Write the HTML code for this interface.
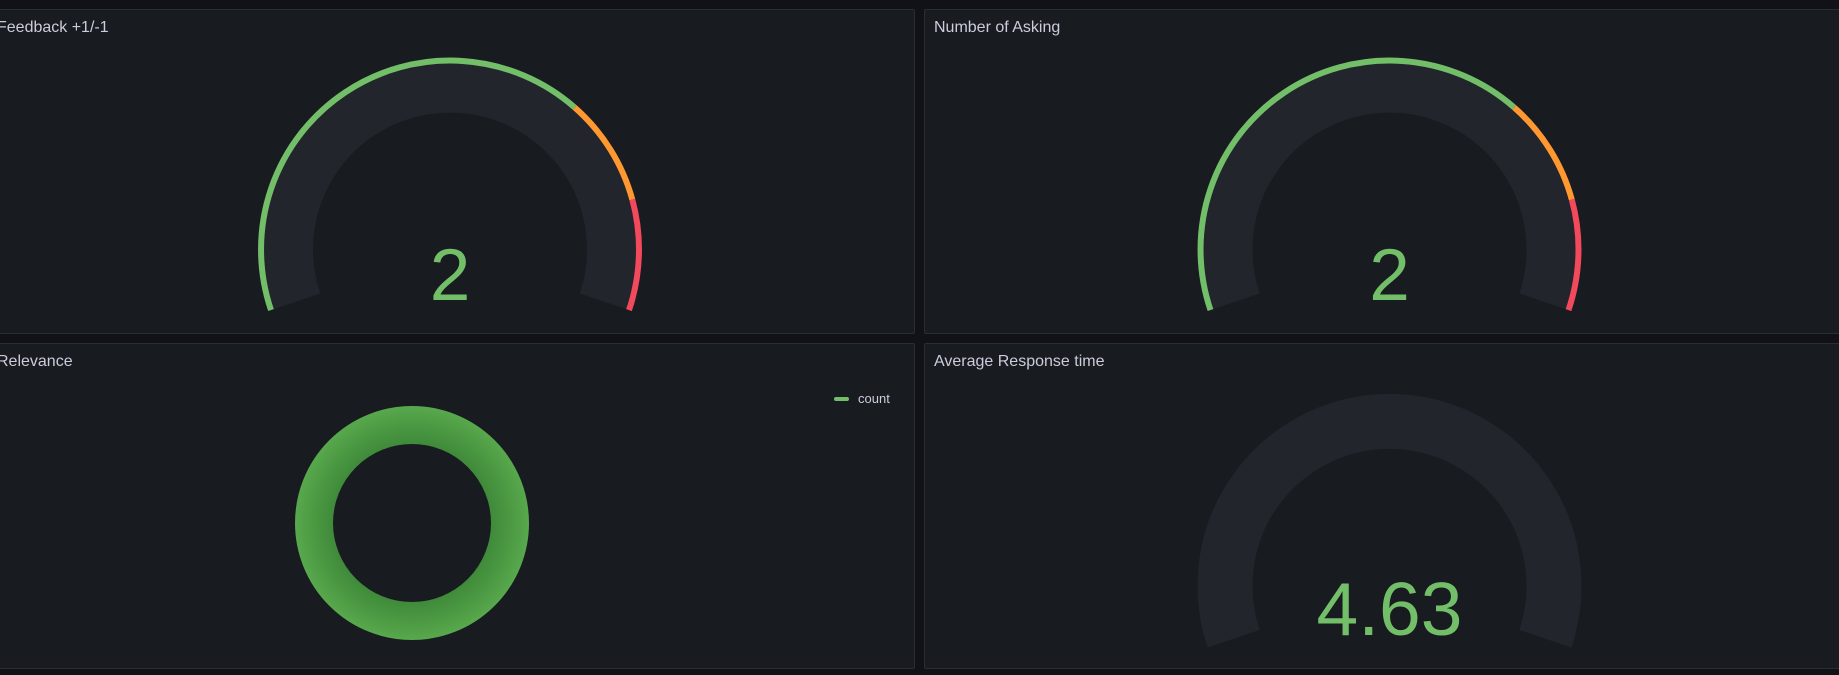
<!DOCTYPE html>
<html><head><meta charset="utf-8"><style>
html,body{margin:0;padding:0;background:#111217;width:1839px;height:675px;overflow:hidden;font-family:"Liberation Sans",sans-serif}
.p{position:absolute;background:#181b1f;border:1px solid #2a2d33;border-radius:2px;box-sizing:border-box}
.t{position:absolute;top:9px;color:#ccccdc;font-size:16px;font-weight:500}
</style></head><body>
<div class="p" style="left:-4px;top:9px;width:919px;height:325px"><div class="t" style="left:0">Feedback +1/-1</div></div>
<div class="p" style="left:924px;top:9px;width:930px;height:325px"><div class="t" style="left:9px">Number of Asking</div></div>
<div class="p" style="left:-4px;top:343px;width:919px;height:326px"><div class="t" style="left:0">Relevance</div></div>
<div class="p" style="left:924px;top:343px;width:930px;height:326px"><div class="t" style="left:9px">Average Response time</div></div>
<svg width="1839" height="675" style="position:absolute;left:0;top:0">
<defs>
<g id="grey"><path d="M297,301.3 A161.5,161.5 0 1 1 603,301.3" fill="none" stroke="#22252b" stroke-width="49"/></g>
<g id="gauge">
<use href="#grey"/>
<path d="M271,310.1 A189,189 0 0 1 574.7,107.5" fill="none" stroke="#73bf69" stroke-width="6"/>
<path d="M574.7,107.5 A189,189 0 0 1 632.3,199.6" fill="none" stroke="#ff9830" stroke-width="6"/>
<path d="M632.3,199.6 A189,189 0 0 1 629,310.1" fill="none" stroke="#f2495c" stroke-width="6"/>
<text x="450" y="300" text-anchor="middle" font-family="Liberation Sans,sans-serif" font-size="73" fill="#73bf69">2</text>
</g>
<radialGradient id="dg" cx="412" cy="523" r="117" gradientUnits="userSpaceOnUse">
<stop offset="0.67" stop-color="#3f8a3a"/><stop offset="0.85" stop-color="#4c9a43"/><stop offset="1" stop-color="#58a84d"/>
</radialGradient>
</defs>
<use href="#gauge"/>
<use href="#gauge" transform="translate(939.5,0)"/>
<path d="M294.2,302.2 A164.5,164.5 0 1 1 605.8,302.2" transform="translate(939.5,336.5)" fill="none" stroke="#22252b" stroke-width="55"/>
<text x="1389.5" y="635" text-anchor="middle" font-family="Liberation Sans,sans-serif" font-size="75" fill="#73bf69">4.63</text>
<circle cx="412" cy="523" r="98" fill="none" stroke="url(#dg)" stroke-width="38"/>
<rect x="834" y="397" width="15" height="4" rx="2" fill="#73bf69"/>
<text x="858" y="403" font-family="Liberation Sans,sans-serif" font-size="13" fill="#ccccdc">count</text>
</svg>
</body></html>
